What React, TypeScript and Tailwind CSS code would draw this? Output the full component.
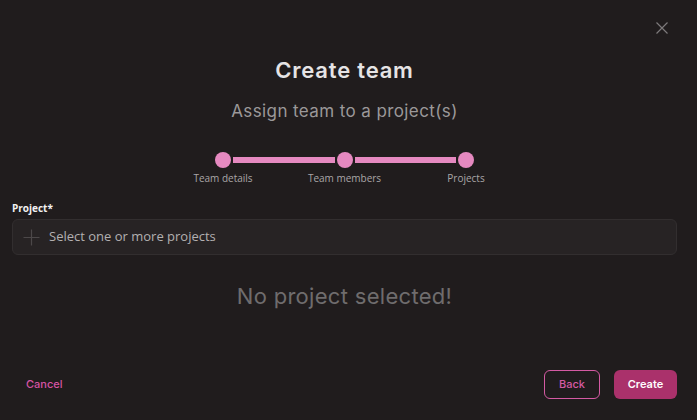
import React from "react";

const steps = ["Team details", "Team members", "Projects"];

export default function App() {
  return (
    <div className="relative h-[420px] w-[697px] overflow-hidden bg-[#201c1d] pl-3 pr-5 font-['Inter',sans-serif]">
      <button className="absolute right-[29px] top-[22px] text-[#7d7a7b]" title="Close">
        <svg width="12" height="12" viewBox="0 0 12 12" fill="none" stroke="currentColor" strokeWidth="1.2">
          <path d="M0.5 0.5 L11.5 11.5 M11.5 0.5 L0.5 11.5" />
        </svg>
      </button>

      <h1 className="pt-[56px] text-center text-[22px] font-semibold leading-[28px] tracking-[0.8px] text-[#e6e4e5]">Create team</h1>
      <p className="mt-[15px] text-center text-[17px] leading-[24px] tracking-[0.4px] text-[#9b9899]">Assign team to a project(s)</p>

      <div className="mx-auto mt-[29px] w-[259px]">
        <div className="flex items-center">
          {steps.map((s, i) => (
            <React.Fragment key={s}>
              {i > 0 && <div className="mx-[2px] h-[6px] flex-1 bg-[#e589c0]" />}
              <div className="h-[16px] w-[16px] shrink-0 rounded-full bg-[#e589c0]" />
            </React.Fragment>
          ))}
        </div>
        <div className="mt-[3px] flex justify-between px-[8px] font-['Open_Sans',sans-serif] text-[10px] font-medium leading-[14px] text-[#a9a6a7]">
          {steps.map(s => (
            <div key={s} className="flex w-0 justify-center whitespace-nowrap">{s}</div>
          ))}
        </div>
      </div>

      <label className="mt-[16px] block font-['Open_Sans',sans-serif] text-[10px] font-bold leading-[14px] text-[#f2f0f1]">Project*</label>
      <div className="mt-[4px] flex h-[36px] items-center gap-[9px] rounded-[6px] border border-[#322e2f] bg-[#272324] pl-[10px] font-['Open_Sans',sans-serif] text-[13px] text-[#b3b0b1]">
        <svg width="17" height="17" viewBox="0 0 17 17" fill="none" stroke="#4c4849" strokeWidth="1.2">
          <path d="M8.5 0.5 V16.5 M0.5 8.5 H16.5" />
        </svg>
        <span>Select one or more projects</span>
      </div>

      <p className="mt-[27px] text-center text-[22px] leading-[28px] tracking-[0.3px] text-[#6f6c6d]">No project selected!</p>

      <div className="mt-[60px] flex items-center justify-between">
        <button className="pl-[14px] text-[11px] font-medium text-[#d653a3]">Cancel</button>
        <div className="flex gap-[14px]">
          <button className="h-[29px] w-[56px] rounded-[6px] border border-[#d45aa3] text-[11px] font-medium text-[#d45aa3]">Back</button>
          <button className="h-[29px] w-[63px] rounded-[6px] bg-[#aa316b] text-[11px] font-semibold text-white">Create</button>
        </div>
      </div>
    </div>
  );
}
